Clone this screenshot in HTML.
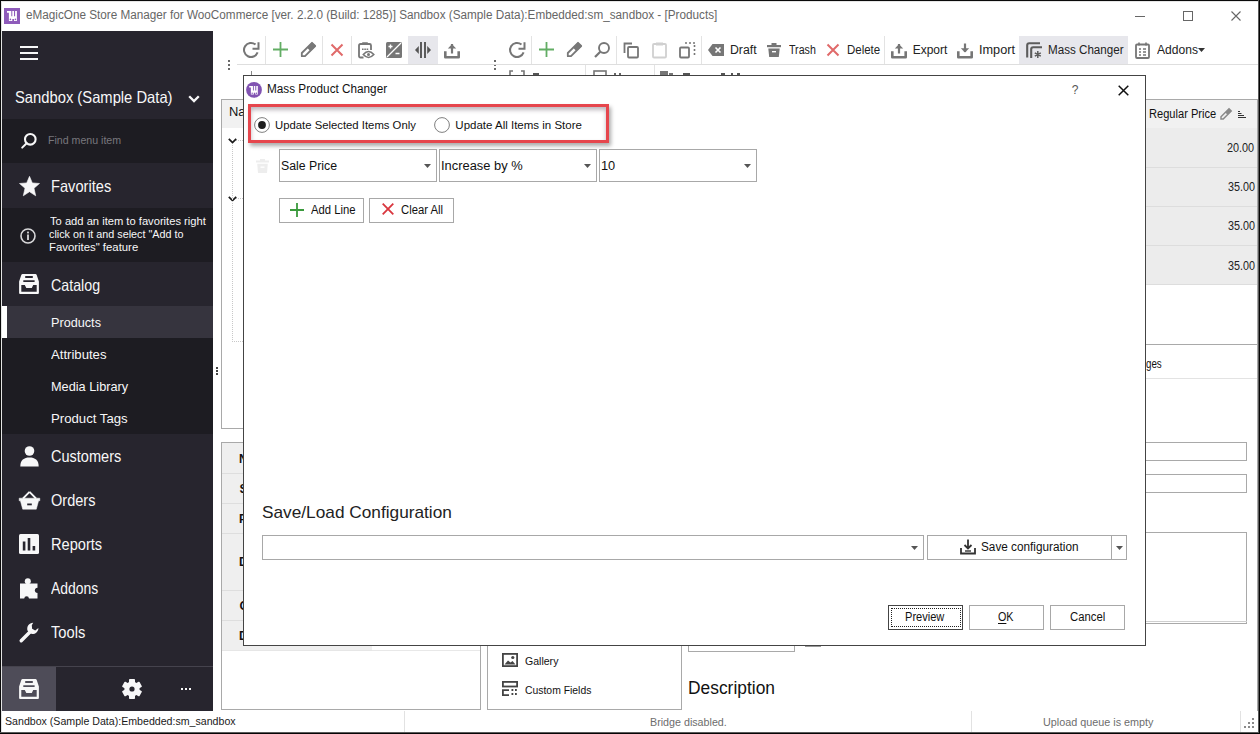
<!DOCTYPE html>
<html><head><meta charset="utf-8">
<style>
*{margin:0;padding:0;box-sizing:border-box}
html,body{width:1260px;height:734px;overflow:hidden;background:#fff;font-family:"Liberation Sans",sans-serif;position:relative}
.a{position:absolute}
svg.a{overflow:visible}
.t{position:absolute;white-space:nowrap;line-height:1}
</style></head>
<body>
<div class="a" style="left:0px;top:0px;width:1260px;height:734px;background:#fff;"></div>
<svg class="a" style="left:4px;top:8px" width="16" height="16" viewBox="0 0 16 16"><rect width="16" height="16" fill="#8e5bba"/><path fill="#fff" d="M3 3H7.3V8.3H8.3V3H10V8.3H11.1V3H12.9V13H10V10.9H8.3V13H4.9V4.7H3Z"/><circle cx="6.4" cy="11.4" r="0.8" fill="#8e5bba"/><circle cx="11.4" cy="11.4" r="0.8" fill="#8e5bba"/></svg>
<div class="t" style="left:25.53px;top:8.54px;font-size:12px;color:#666;transform:scaleX(0.9771);transform-origin:0 0;">eMagicOne Store Manager for WooCommerce [ver. 2.2.0 (Build: 1285)] Sandbox (Sample Data):Embedded:sm_sandbox - [Products]</div>
<div class="a" style="left:1135px;top:16px;width:10px;height:1px;background:#666;"></div>
<div class="a" style="left:1183px;top:11px;width:10px;height:10px;border:1px solid #666"></div>
<svg class="a" style="left:1231px;top:11px" width="10" height="10" viewBox="0 0 10 10"><path d="M0.5 0.5L9.5 9.5M9.5 0.5L0.5 9.5" stroke="#666" stroke-width="1.1"/></svg>
<div class="a" style="left:2px;top:31px;width:211px;height:680px;background:#27252e;"></div>
<div class="a" style="left:20px;top:46px;width:18px;height:2px;background:#f7f7f8;"></div>
<div class="a" style="left:20px;top:52px;width:18px;height:2px;background:#f7f7f8;"></div>
<div class="a" style="left:20px;top:58px;width:18px;height:2px;background:#f7f7f8;"></div>
<div class="t" style="left:15.14px;top:89.13px;font-size:16.5px;color:#f7f7f8;transform:scaleX(0.8945);transform-origin:0 0;">Sandbox (Sample Data)</div>
<svg class="a" style="left:188px;top:94.6px" width="12" height="8" viewBox="0 0 12 8"><path d="M1.2 1.2L6 6L10.8 1.2" stroke="#f7f7f8" stroke-width="2.3" fill="none"/></svg>
<div class="a" style="left:2px;top:119px;width:211px;height:44px;background:#1d1c22;"></div>
<svg class="a" style="left:21px;top:133px" width="17" height="17" viewBox="0 0 17 17"><circle cx="9.3" cy="6.3" r="5.3" stroke="#f7f7f8" stroke-width="2.1" fill="none"/><path d="M5.6 10.2L1.2 14.6" stroke="#f7f7f8" stroke-width="2" stroke-linecap="round"/></svg>
<div class="t" style="left:48.05px;top:134.57px;font-size:11.5px;color:#78777d;transform:scaleX(0.9224);transform-origin:0 0;">Find menu item</div>
<svg class="a" style="left:18.5px;top:176px" width="21" height="20.5" viewBox="0 0 21 20.5"><path d="M10.5 0.3L13.3 6.9L20.5 7.5L15 12.2L16.7 19.8L10.5 15.7L4.3 19.8L6 12.2L0.5 7.5L7.7 6.9Z" fill="#f7f7f8" stroke="#f7f7f8" stroke-width="0.6" stroke-linejoin="round"/></svg>
<div class="t" style="left:51.33px;top:178.03px;font-size:16.5px;color:#f7f7f8;transform:scaleX(0.8875);transform-origin:0 0;">Favorites</div>
<div class="a" style="left:2px;top:208px;width:211px;height:54px;background:#1d1c22;"></div>
<svg class="a" style="left:20px;top:227.5px" width="16" height="16" viewBox="0 0 16 16"><circle cx="8" cy="8" r="7" stroke="#d8d8da" stroke-width="1.6" fill="none"/><rect x="7.1" y="6.5" width="1.8" height="5.5" fill="#d8d8da"/><rect x="7.1" y="3.6" width="1.8" height="1.8" fill="#d8d8da"/></svg>
<div class="t" style="left:49.68px;top:215.97px;font-size:11.5px;color:#f7f7f8;transform:scaleX(0.9713);transform-origin:0 0;">To add an item to favorites right</div>
<div class="t" style="left:49.47px;top:228.97px;font-size:11.5px;color:#f7f7f8;transform:scaleX(0.9376);transform-origin:0 0;">click on it and select "Add to</div>
<div class="t" style="left:48.99px;top:241.97px;font-size:11.5px;color:#f7f7f8;transform:scaleX(0.9870);transform-origin:0 0;">Favorites" feature</div>
<svg class="a" style="left:19px;top:274px" width="20" height="20" viewBox="0 0 20 20"><path fill-rule="evenodd" fill="#f7f7f8" d="M3.6 0H16.4Q17.4 0 17.7 1L19.9 7.6V19Q19.9 20 18.9 20H1.1Q0.1 20 0.1 19V7.6L2.3 1Q2.6 0 3.6 0Z M6.2 2.1H13.8V3.9H6.2Z M4.3 6.2H15.6V8H4.3Z M2.3 11.1H5.8L7.3 14.1H12.8L14.2 11.1H17.7V17.7H2.3Z"/></svg>
<div class="t" style="left:50.99px;top:276.53px;font-size:16.5px;color:#f7f7f8;transform:scaleX(0.8632);transform-origin:0 0;">Catalog</div>
<div class="a" style="left:2px;top:306px;width:211px;height:32px;background:#36343e;"></div>
<div class="a" style="left:2px;top:306px;width:5px;height:32px;background:#fff;"></div>
<div class="t" style="left:51.49px;top:315.77px;font-size:13.5px;color:#f7f7f8;transform:scaleX(0.9380);transform-origin:0 0;">Products</div>
<div class="a" style="left:2px;top:338px;width:211px;height:96px;background:#1d1c22;"></div>
<div class="t" style="left:51.20px;top:347.77px;font-size:13.5px;color:#f7f7f8;transform:scaleX(0.9723);transform-origin:0 0;">Attributes</div>
<div class="t" style="left:51.48px;top:379.77px;font-size:13.5px;color:#f7f7f8;transform:scaleX(0.9439);transform-origin:0 0;">Media Library</div>
<div class="t" style="left:51.45px;top:411.77px;font-size:13.5px;color:#f7f7f8;transform:scaleX(0.9764);transform-origin:0 0;">Product Tags</div>
<svg class="a" style="left:20px;top:446px" width="19" height="21" viewBox="0 0 19 21"><circle cx="9.5" cy="5" r="4.8" fill="#f7f7f8"/><path d="M0.3 20.5C0.3 14 4 11.5 9.5 11.5S18.7 14 18.7 20.5Z" fill="#f7f7f8"/></svg>
<div class="t" style="left:51.17px;top:448.13px;font-size:16.5px;color:#f7f7f8;transform:scaleX(0.8804);transform-origin:0 0;">Customers</div>
<svg class="a" style="left:19px;top:491px" width="21" height="19" viewBox="0 0 21 19"><path d="M10.5 0.8L4 7.5M10.5 0.8L17 7.5" stroke="#f7f7f8" stroke-width="1.8" fill="none"/><path d="M0.2 7.2h20.6v2.6h-1.2L17.3 18.2H3.7L1.4 9.8H0.2Z" fill="#f7f7f8" stroke="#f7f7f8" stroke-width="0.5" stroke-linejoin="round"/><rect x="8.2" y="12.5" width="4.6" height="1.8" fill="#27252e"/></svg>
<div class="t" style="left:51.05px;top:492.03px;font-size:16.5px;color:#f7f7f8;transform:scaleX(0.8821);transform-origin:0 0;">Orders</div>
<svg class="a" style="left:19px;top:534px" width="20" height="20" viewBox="0 0 20 20"><rect x="0" y="0" width="20" height="20" rx="1.5" fill="#f7f7f8"/><rect x="3.8" y="7.5" width="2.6" height="9" fill="#27252e"/><rect x="8.7" y="4" width="2.6" height="12.5" fill="#27252e"/><rect x="13.6" y="12" width="2.6" height="4.5" fill="#27252e"/></svg>
<div class="t" style="left:50.93px;top:536.03px;font-size:16.5px;color:#f7f7f8;transform:scaleX(0.8845);transform-origin:0 0;">Reports</div>
<svg class="a" style="left:20px;top:577.5px" width="18" height="21" viewBox="0 0 18 21"><path fill="#f7f7f8" d="M0 5.5H17.5V20.5H0Z"/><circle cx="7.8" cy="3.2" r="3" fill="#f7f7f8"/><circle cx="17.5" cy="12.3" r="2.6" fill="#27252e"/><circle cx="6.6" cy="20.6" r="2.3" fill="#27252e"/></svg>
<div class="t" style="left:50.70px;top:580.03px;font-size:16.5px;color:#f7f7f8;transform:scaleX(0.8436);transform-origin:0 0;">Addons</div>
<svg class="a" style="left:19px;top:622px" width="21" height="21" viewBox="0 0 21 21"><path d="M2.2 18.8L11.2 9.8" stroke="#f7f7f8" stroke-width="3.4" stroke-linecap="round"/><path d="M14.2 0.8a5.9 5.9 0 0 0-5.6 8l2.8 2.8a5.9 5.9 0 0 0 8-5.6l-3.2 2.6-3.1-1.9-0.3-3.5Z" fill="#f7f7f8"/></svg>
<div class="t" style="left:50.71px;top:624.03px;font-size:16.5px;color:#f7f7f8;transform:scaleX(0.8905);transform-origin:0 0;">Tools</div>
<div class="a" style="left:2px;top:666px;width:211px;height:1px;background:#45434d;"></div>
<div class="a" style="left:2px;top:667px;width:54px;height:44px;background:#4e4c58;"></div>
<svg class="a" style="left:19px;top:679px" width="20" height="20" viewBox="0 0 20 20"><path fill-rule="evenodd" fill="#f7f7f8" d="M3.6 0H16.4Q17.4 0 17.7 1L19.9 7.6V19Q19.9 20 18.9 20H1.1Q0.1 20 0.1 19V7.6L2.3 1Q2.6 0 3.6 0Z M6.2 2.1H13.8V3.9H6.2Z M4.3 6.2H15.6V8H4.3Z M2.3 11.1H5.8L7.3 14.1H12.8L14.2 11.1H17.7V17.7H2.3Z"/></svg>
<svg class="a" style="left:122px;top:679px" width="20" height="20" viewBox="0 0 20 20"><g transform="translate(10 10)" fill="#f7f7f8"><circle r="7.6"/><rect x="-3" y="-10" width="6" height="5" rx="0.8" transform="rotate(0)"/><rect x="-3" y="-10" width="6" height="5" rx="0.8" transform="rotate(60)"/><rect x="-3" y="-10" width="6" height="5" rx="0.8" transform="rotate(120)"/><rect x="-3" y="-10" width="6" height="5" rx="0.8" transform="rotate(180)"/><rect x="-3" y="-10" width="6" height="5" rx="0.8" transform="rotate(240)"/><rect x="-3" y="-10" width="6" height="5" rx="0.8" transform="rotate(300)"/></g><circle cx="10" cy="10" r="2.6" fill="#27252e"/></svg>
<div class="a" style="left:181px;top:688px;width:2px;height:2px;background:#f7f7f8;"></div>
<div class="a" style="left:185px;top:688px;width:2px;height:2px;background:#f7f7f8;"></div>
<div class="a" style="left:189px;top:688px;width:2px;height:2px;background:#f7f7f8;"></div>
<div class="t" style="left:4.82px;top:716.27px;font-size:11.5px;color:#1a1a1a;transform:scaleX(0.9225);transform-origin:0 0;">Sandbox (Sample Data):Embedded:sm_sandbox</div>
<div class="a" style="left:404px;top:711px;width:1px;height:21px;background:#e2e2e2;"></div>
<div class="t" style="left:650.44px;top:716.57px;font-size:11.5px;color:#6d6d6d;transform:scaleX(0.9310);transform-origin:0 0;">Bridge disabled.</div>
<div class="a" style="left:971px;top:711px;width:1px;height:21px;background:#e2e2e2;"></div>
<div class="t" style="left:1043.49px;top:716.57px;font-size:11.5px;color:#6d6d6d;transform:scaleX(0.9394);transform-origin:0 0;">Upload queue is empty</div>
<div class="a" style="left:1240px;top:711px;width:1px;height:21px;background:#e2e2e2;"></div>
<div class="a" style="left:1252px;top:718px;width:2px;height:2px;background:#8a8a8a;"></div>
<div class="a" style="left:1248px;top:722px;width:2px;height:2px;background:#8a8a8a;"></div>
<div class="a" style="left:1252px;top:722px;width:2px;height:2px;background:#8a8a8a;"></div>
<div class="a" style="left:1244px;top:726px;width:2px;height:2px;background:#8a8a8a;"></div>
<div class="a" style="left:1248px;top:726px;width:2px;height:2px;background:#8a8a8a;"></div>
<div class="a" style="left:1252px;top:726px;width:2px;height:2px;background:#8a8a8a;"></div>
<div class="a" style="left:228px;top:60px;width:2px;height:2px;background:#6a6a6a;"></div>
<div class="a" style="left:228px;top:64px;width:2px;height:2px;background:#6a6a6a;"></div>
<div class="a" style="left:228px;top:68px;width:2px;height:2px;background:#6a6a6a;"></div>
<div class="a" style="left:494px;top:60px;width:2px;height:2px;background:#6a6a6a;"></div>
<div class="a" style="left:494px;top:64px;width:2px;height:2px;background:#6a6a6a;"></div>
<div class="a" style="left:494px;top:68px;width:2px;height:2px;background:#6a6a6a;"></div>
<div class="a" style="left:237px;top:64px;width:1021px;height:1px;background:#dedede;"></div>
<div class="a" style="left:408px;top:36px;width:30px;height:28px;background:#e7e7ec;"></div>
<div class="a" style="left:1019px;top:36px;width:109px;height:28px;background:#e7e7ec;"></div>
<div class="a" style="left:265px;top:36px;width:1px;height:28px;background:#e3e3e3;"></div>
<div class="a" style="left:322px;top:36px;width:1px;height:28px;background:#e3e3e3;"></div>
<div class="a" style="left:351px;top:36px;width:1px;height:28px;background:#e3e3e3;"></div>
<div class="a" style="left:531px;top:36px;width:1px;height:28px;background:#e3e3e3;"></div>
<div class="a" style="left:616px;top:36px;width:1px;height:28px;background:#e3e3e3;"></div>
<div class="a" style="left:701px;top:36px;width:1px;height:28px;background:#e3e3e3;"></div>
<div class="a" style="left:884px;top:36px;width:1px;height:28px;background:#e3e3e3;"></div>
<svg class="a" style="left:243px;top:42px" width="17" height="16" viewBox="0 0 17 16"><path d="M14.6 10.4A7 7 0 1 1 12.5 2.6" stroke="#767676" stroke-width="2" fill="none"/><path d="M15.5 0.2V6.8H9.5" stroke="#767676" stroke-width="2" fill="none"/></svg>
<svg class="a" style="left:273px;top:42px" width="15" height="15" viewBox="0 0 15 15"><path d="M7.5 0v15M0 7.5h15" stroke="#62ad64" stroke-width="1.8"/></svg>
<svg class="a" style="left:300px;top:42px" width="16" height="16" viewBox="0 0 16 16"><path d="M12 0.8L15.2 4L5 14.2H1.8V11Z" fill="none" stroke="#787878" stroke-width="1.8" stroke-linejoin="round"/><path d="M12 0.8L15.2 4L10.5 8.7L7.3 5.5Z" fill="#787878" stroke="#787878" stroke-width="1"/></svg>
<svg class="a" style="left:331px;top:44px" width="12" height="12" viewBox="0 0 12 12"><path d="M0.5 0.5L11.5 11.5M11.5 0.5L0.5 11.5" stroke="#e06a6a" stroke-width="2"/></svg>
<svg class="a" style="left:358px;top:42px" width="17" height="17" viewBox="0 0 17 17"><path d="M5.5 15.5H2.5Q1 15.5 1 14V3.5Q1 2 2.5 2H11.5Q13 2 13 3.5V8" stroke="#767676" stroke-width="1.8" fill="none"/><rect x="4" y="0.3" width="6" height="2.8" rx="0.8" fill="#767676"/><path d="M4 7.2h1.6M6.3 7.2h1.6M8.6 7.2h1.6" stroke="#767676" stroke-width="1.5"/><path d="M5.3 12.5Q10.5 6.5 15.8 12.5Q10.5 18.5 5.3 12.5Z" fill="#fff" stroke="#767676" stroke-width="1.6"/><circle cx="10.5" cy="12.5" r="1.5" fill="#767676"/></svg>
<svg class="a" style="left:386px;top:42px" width="16" height="16" viewBox="0 0 16 16"><rect x="0" y="0" width="16" height="16" rx="1.5" fill="#767676"/><path d="M15 1L1 15" stroke="#fff" stroke-width="1.3"/><path d="M2.5 4.5h4M4.5 2.5v4M9.5 11.5h4" stroke="#fff" stroke-width="1.4"/></svg>
<svg class="a" style="left:414px;top:42px" width="18" height="16" viewBox="0 0 18 16"><path d="M7 0v16M11 0v16" stroke="#555" stroke-width="1.9"/><path d="M4.8 4L1 8L4.8 12Z M13.2 4L17 8L13.2 12Z" fill="#555"/></svg>
<svg class="a" style="left:444px;top:42.5px" width="16" height="16" viewBox="0 0 16 16"><path d="M8 1v9.5" stroke="#767676" stroke-width="2.2"/><path d="M3.8 5.6L8 1.2L12.2 5.6Z" fill="#767676"/><path d="M1.3 8.2V14.2H14.7V8.2" stroke="#767676" stroke-width="2.6" fill="none" stroke-linejoin="round"/></svg>
<svg class="a" style="left:509px;top:42px" width="17" height="16" viewBox="0 0 17 16"><path d="M14.6 10.4A7 7 0 1 1 12.5 2.6" stroke="#767676" stroke-width="2" fill="none"/><path d="M15.5 0.2V6.8H9.5" stroke="#767676" stroke-width="2" fill="none"/></svg>
<svg class="a" style="left:539px;top:42px" width="15" height="15" viewBox="0 0 15 15"><path d="M7.5 0v15M0 7.5h15" stroke="#62ad64" stroke-width="1.8"/></svg>
<svg class="a" style="left:566px;top:42px" width="16" height="16" viewBox="0 0 16 16"><path d="M12 0.8L15.2 4L5 14.2H1.8V11Z" fill="none" stroke="#787878" stroke-width="1.8" stroke-linejoin="round"/><path d="M12 0.8L15.2 4L10.5 8.7L7.3 5.5Z" fill="#787878" stroke="#787878" stroke-width="1"/></svg>
<svg class="a" style="left:594px;top:42px" width="16" height="16" viewBox="0 0 16 16"><circle cx="10" cy="6" r="5" stroke="#767676" stroke-width="1.9" fill="none"/><path d="M6.3 9.7L1 15" stroke="#767676" stroke-width="2.2"/></svg>
<svg class="a" style="left:623px;top:42px" width="16" height="16" viewBox="0 0 16 16"><path d="M9 1.5H1.5V11" stroke="#767676" stroke-width="1.8" fill="none"/><rect x="5" y="5" width="10" height="10.5" rx="1" stroke="#767676" stroke-width="1.8" fill="none"/></svg>
<svg class="a" style="left:652px;top:42px" width="15" height="16" viewBox="0 0 15 16"><rect x="1" y="2" width="13" height="13.5" rx="1" stroke="#d0d0d0" stroke-width="1.8" fill="none"/><rect x="4" y="0.5" width="7" height="3" fill="#d0d0d0"/></svg>
<svg class="a" style="left:679px;top:42px" width="17" height="16" viewBox="0 0 17 16"><rect x="1" y="5.5" width="9" height="10" rx="1" stroke="#767676" stroke-width="1.8" fill="none"/><path d="M6 1h2M10 1h2M14 1h2M15.5 3v2M15.5 7v2M15.5 11v2" stroke="#767676" stroke-width="1.6"/></svg>
<svg class="a" style="left:708px;top:44px" width="16" height="12" viewBox="0 0 16 12"><path d="M4.5 0H16V12H4.5L0 6Z" fill="#767676"/><path d="M7.5 3.5l5 5M12.5 3.5l-5 5" stroke="#fff" stroke-width="1.6"/></svg>
<div class="t" style="left:729.72px;top:43.84px;font-size:12px;color:#222;transform:scaleX(1.0232);transform-origin:0 0;">Draft</div>
<svg class="a" style="left:767px;top:43px" width="14" height="14" viewBox="0 0 14 14"><rect x="0" y="2" width="14" height="2.2" fill="#767676"/><rect x="4.5" y="0" width="5" height="2.5" fill="#767676"/><path d="M1.3 5.5h11.4L11.8 14H2.2Z" fill="#767676"/><rect x="5" y="8" width="4" height="1.4" fill="#fff"/></svg>
<div class="t" style="left:788.79px;top:43.84px;font-size:12px;color:#222;transform:scaleX(0.8880);transform-origin:0 0;">Trash</div>
<svg class="a" style="left:827px;top:44px" width="12" height="12" viewBox="0 0 12 12"><path d="M0.5 0.5L11.5 11.5M11.5 0.5L0.5 11.5" stroke="#e06a6a" stroke-width="2"/></svg>
<div class="t" style="left:847.18px;top:43.84px;font-size:12px;color:#222;transform:scaleX(0.9567);transform-origin:0 0;">Delete</div>
<svg class="a" style="left:891px;top:42.5px" width="16" height="16" viewBox="0 0 16 16"><path d="M8 1v9.5" stroke="#767676" stroke-width="2.2"/><path d="M3.8 5.6L8 1.2L12.2 5.6Z" fill="#767676"/><path d="M1.3 8.2V14.2H14.7V8.2" stroke="#767676" stroke-width="2.6" fill="none" stroke-linejoin="round"/></svg>
<div class="t" style="left:912.64px;top:43.84px;font-size:12px;color:#222;">Export</div>
<svg class="a" style="left:957px;top:42.5px" width="16" height="16" viewBox="0 0 16 16"><path d="M8 0.5V9" stroke="#767676" stroke-width="2.2"/><path d="M3.8 5.2L8 9.6L12.2 5.2Z" fill="#767676"/><path d="M1.3 8.2V14.2H14.7V8.2" stroke="#767676" stroke-width="2.6" fill="none" stroke-linejoin="round"/></svg>
<div class="t" style="left:978.76px;top:43.84px;font-size:12px;color:#222;transform:scaleX(1.0584);transform-origin:0 0;">Import</div>
<svg class="a" style="left:1026px;top:42px" width="17" height="17" viewBox="0 0 17 17"><path d="M1.2 15.5V3.2Q1.2 1.2 3.2 1.2H14" stroke="#5c5c5c" stroke-width="2.1" fill="none"/><path d="M5.2 16V7.2Q5.2 5.2 7.2 5.2H16" stroke="#5c5c5c" stroke-width="2.1" fill="none"/><path d="M11.8 9V16M8.8 10.8L14.8 14.2M14.8 10.8L8.8 14.2" stroke="#5c5c5c" stroke-width="1.5"/></svg>
<div class="t" style="left:1047.77px;top:43.84px;font-size:12px;color:#222;transform:scaleX(0.9685);transform-origin:0 0;">Mass Changer</div>
<svg class="a" style="left:1135px;top:42px" width="15" height="17" viewBox="0 0 15 17"><rect x="1" y="2.5" width="13" height="13.5" rx="1" stroke="#767676" stroke-width="1.8" fill="none"/><path d="M4 0.5v3M11 0.5v3" stroke="#767676" stroke-width="1.6"/><path d="M4 7h2M8 7h3M4 10h2M8 10h3M4 13h2M8 13h3" stroke="#767676" stroke-width="1.3"/></svg>
<div class="t" style="left:1156.50px;top:43.84px;font-size:12px;color:#222;transform:scaleX(1.0060);transform-origin:0 0;">Addons</div>
<svg class="a" style="left:1198px;top:48px" width="7" height="4" viewBox="0 0 7 4"><path d="M0 0h7L3.5 4Z" fill="#333"/></svg>
<div class="a" style="left:585px;top:65px;width:1px;height:10px;background:#e3e3e3;"></div>
<div class="a" style="left:654px;top:65px;width:1px;height:10px;background:#e3e3e3;"></div>
<div class="a" style="left:251px;top:71px;width:1px;height:4px;background:#888;"></div>
<svg class="a" style="left:509px;top:70px" width="16" height="5" viewBox="0 0 16 5"><path d="M1 5V1h3M12 1h3v4" stroke="#767676" stroke-width="1.6" fill="none"/></svg>
<div class="a" style="left:533px;top:73px;width:6px;height:2px;background:#555;"></div>
<div class="a" style="left:614px;top:73px;width:2px;height:2px;background:#666;"></div>
<div class="a" style="left:619px;top:73px;width:2px;height:2px;background:#666;"></div>
<div class="a" style="left:683px;top:73px;width:7px;height:2px;background:#555;"></div>
<div class="a" style="left:721px;top:73px;width:4px;height:2px;background:#555;"></div>
<div class="a" style="left:731px;top:73px;width:2px;height:2px;background:#555;"></div>
<div class="a" style="left:737px;top:73px;width:3px;height:2px;background:#555;"></div>
<svg class="a" style="left:593px;top:70px" width="16" height="5" viewBox="0 0 16 5"><rect x="1" y="1" width="12" height="8" stroke="#767676" stroke-width="1.6" fill="none"/></svg>
<svg class="a" style="left:660px;top:70px" width="30" height="5" viewBox="0 0 30 5"><rect x="0" y="1" width="8" height="4" fill="#767676"/><rect x="9" y="3" width="4" height="2" fill="#767676"/></svg>
<div class="a" style="left:221px;top:99px;width:1037px;height:1px;background:#a9a9a9;"></div>
<div class="a" style="left:221px;top:99px;width:1px;height:330px;background:#a9a9a9;"></div>
<div class="a" style="left:221px;top:428px;width:23px;height:1px;background:#a9a9a9;"></div>
<div class="a" style="left:1146px;top:344px;width:112px;height:1px;background:#a9a9a9;"></div>
<div class="a" style="left:222px;top:100px;width:1035px;height:28px;background:#f1f1f1;"></div>
<div class="a" style="left:1146px;top:128px;width:111px;height:156px;background:#ececec;"></div>
<div class="a" style="left:1146px;top:167px;width:111px;height:1px;background:#dddddd;"></div>
<div class="a" style="left:1146px;top:206px;width:111px;height:1px;background:#dddddd;"></div>
<div class="a" style="left:1146px;top:245px;width:111px;height:1px;background:#dddddd;"></div>
<div class="a" style="left:1146px;top:284px;width:111px;height:1px;background:#dddddd;"></div>
<div class="t" style="left:228.57px;top:106.14px;font-size:12px;color:#111;transform:scaleX(1.0764);transform-origin:0 0;">Na</div>
<div class="t" style="left:1148.91px;top:107.54px;font-size:12px;color:#111;transform:scaleX(0.9239);transform-origin:0 0;">Regular Price</div>
<svg class="a" style="left:1220px;top:108px" width="12" height="12" viewBox="0 0 12 12"><path d="M9 0.8L11.2 3L3.2 11H1V8.8Z" fill="none" stroke="#8a8a8a" stroke-width="1.5"/><path d="M9 0.8L11.2 3L7.5 6.7L5.3 4.5Z" fill="#8a8a8a"/></svg>
<svg class="a" style="left:1238px;top:111px" width="9" height="8" viewBox="0 0 9 8"><path d="M0 0.5h2M0 2.5h3.5M0 4.5h6M0 6.5h8" stroke="#333" stroke-width="1"/></svg>
<div class="t" style="left:1227.46px;top:141.84px;font-size:12px;color:#222;transform:scaleX(0.9041);transform-origin:0 0;">20.00</div>
<div class="t" style="left:1227.62px;top:181.44px;font-size:12px;color:#222;transform:scaleX(0.8985);transform-origin:0 0;">35.00</div>
<div class="t" style="left:1227.62px;top:220.44px;font-size:12px;color:#222;transform:scaleX(0.8985);transform-origin:0 0;">35.00</div>
<div class="t" style="left:1227.62px;top:259.64px;font-size:12px;color:#222;transform:scaleX(0.8985);transform-origin:0 0;">35.00</div>
<svg class="a" style="left:227.5px;top:137.5px" width="9" height="6" viewBox="0 0 9 6"><path d="M0.8 0.8L4.5 4.6L8.2 0.8" stroke="#1a1a1a" stroke-width="1.7" fill="none"/></svg>
<svg class="a" style="left:227.5px;top:195.5px" width="9" height="6" viewBox="0 0 9 6"><path d="M0.8 0.8L4.5 4.6L8.2 0.8" stroke="#1a1a1a" stroke-width="1.7" fill="none"/></svg>
<div class="a" style="left:232px;top:145px;width:1px;height:197px;border-left:1px dotted #c8c8c8"></div>
<div class="a" style="left:236px;top:140px;width:7px;height:1px;border-top:1px dotted #c8c8c8"></div>
<div class="a" style="left:236px;top:198px;width:7px;height:1px;border-top:1px dotted #c8c8c8"></div>
<div class="a" style="left:232px;top:341px;width:11px;height:1px;border-top:1px dotted #c8c8c8"></div>
<div class="a" style="left:216px;top:367px;width:2px;height:2px;background:#444;"></div>
<div class="a" style="left:216px;top:370px;width:2px;height:2px;background:#444;"></div>
<div class="a" style="left:216px;top:373px;width:2px;height:2px;background:#444;"></div>
<div class="t" style="left:1145.91px;top:357.64px;font-size:12px;color:#111;transform:scaleX(0.8143);transform-origin:0 0;">ges</div>
<div class="a" style="left:1145px;top:378px;width:113px;height:1px;background:#e3e3e3;"></div>
<div class="a" style="left:1257px;top:99px;width:1px;height:612px;background:#a9a9a9;"></div>
<div class="a" style="left:1100px;top:442px;width:147px;height:19px;border:1px solid #a9a9a9"></div>
<div class="a" style="left:1100px;top:474px;width:147px;height:19px;border:1px solid #a9a9a9"></div>
<div class="a" style="left:1100px;top:532px;width:147px;height:92px;border:1px solid #a9a9a9"></div>
<div class="a" style="left:1100px;top:621px;width:147px;height:1px;background:#cfcfcf;"></div>
<div class="a" style="left:221px;top:442px;width:260px;height:268px;border:1px solid #a9a9a9"></div>
<div class="a" style="left:222px;top:443px;width:150px;height:30px;background:#efefef;"></div>
<div class="a" style="left:222px;top:474px;width:150px;height:29px;background:#efefef;"></div>
<div class="a" style="left:222px;top:504px;width:150px;height:29px;background:#efefef;"></div>
<div class="a" style="left:222px;top:534px;width:150px;height:56px;background:#efefef;"></div>
<div class="a" style="left:222px;top:591px;width:150px;height:29px;background:#efefef;"></div>
<div class="a" style="left:222px;top:621px;width:150px;height:29px;background:#efefef;"></div>
<div class="a" style="left:222px;top:473px;width:21px;height:1px;background:#dedede;"></div>
<div class="a" style="left:222px;top:503px;width:21px;height:1px;background:#dedede;"></div>
<div class="a" style="left:222px;top:533px;width:21px;height:1px;background:#dedede;"></div>
<div class="a" style="left:222px;top:590px;width:21px;height:1px;background:#dedede;"></div>
<div class="a" style="left:222px;top:620px;width:21px;height:1px;background:#dedede;"></div>
<div class="a" style="left:222px;top:650px;width:21px;height:1px;background:#dedede;"></div>
<div class="a" style="left:222px;top:650px;width:150px;height:1px;background:#e6e6e6;"></div>
<div class="a" style="left:372px;top:650px;width:108px;height:1px;background:#e8e8e8;"></div>
<div class="t" style="left:239.12px;top:452.84px;font-size:12px;color:#111;font-weight:bold;">N</div>
<div class="t" style="left:239.60px;top:482.84px;font-size:12px;color:#111;font-weight:bold;">S</div>
<div class="t" style="left:239.12px;top:512.84px;font-size:12px;color:#111;font-weight:bold;">P</div>
<div class="t" style="left:239.12px;top:555.84px;font-size:12px;color:#111;font-weight:bold;">D</div>
<div class="t" style="left:239.42px;top:600.34px;font-size:12px;color:#111;font-weight:bold;">C</div>
<div class="t" style="left:239.12px;top:629.84px;font-size:12px;color:#111;font-weight:bold;">D</div>
<div class="a" style="left:487px;top:629px;width:195px;height:81px;border:1px solid #a9a9a9"></div>
<svg class="a" style="left:502px;top:653px" width="16" height="14" viewBox="0 0 16 14"><rect x="0.9" y="0.9" width="14.2" height="12.2" stroke="#444" stroke-width="1.8" fill="none"/><path d="M2.5 11.5L6 7.5L8.5 9.5L10.5 8L13.5 11.5Z" fill="#444"/><circle cx="10.8" cy="4.5" r="1.6" fill="#444"/></svg>
<div class="t" style="left:525.27px;top:656.47px;font-size:11.5px;color:#111;transform:scaleX(0.9169);transform-origin:0 0;">Gallery</div>
<svg class="a" style="left:502px;top:681px" width="16" height="15" viewBox="0 0 16 15"><rect x="0.9" y="0.9" width="14.2" height="4.6" stroke="#444" stroke-width="1.8" fill="none"/><path d="M7 9.2H0.9v4.9H7" stroke="#444" stroke-width="1.8" fill="none"/><path d="M9.5 9h1.8M13 9h1.8M9.5 13h1.8M13 13h1.8" stroke="#444" stroke-width="1.8"/></svg>
<div class="t" style="left:525.28px;top:684.77px;font-size:11.5px;color:#111;transform:scaleX(0.9034);transform-origin:0 0;">Custom Fields</div>
<div class="a" style="left:688px;top:600px;width:107px;height:52px;border:1px solid #a9a9a9"></div>
<div class="a" style="left:805px;top:646px;width:16px;height:1px;background:#999;"></div>
<div class="t" style="left:688.11px;top:680.49px;font-size:17.5px;color:#111;transform:scaleX(0.9935);transform-origin:0 0;">Description</div>
<div class="a" style="left:243px;top:75px;width:903px;height:571px;background:#fff;border:1px solid #444"></div>
<svg class="a" style="left:246px;top:82px" width="16" height="16" viewBox="0 0 16 16"><circle cx="8" cy="7.9" r="7.9" fill="#8153b2"/><g transform="translate(0.6 1.3) scale(0.87)"><path fill="#fff" d="M3 3H7.3V8.3H8.3V3H10V8.3H11.1V3H12.9V13H10V10.9H8.3V13H4.9V4.7H3Z"/><circle cx="6.4" cy="11.4" r="0.8" fill="#8153b2"/><circle cx="11.4" cy="11.4" r="0.8" fill="#8153b2"/></g></svg>
<div class="t" style="left:267.26px;top:82.54px;font-size:12px;color:#111;transform:scaleX(0.9785);transform-origin:0 0;">Mass Product Changer</div>
<div class="t" style="left:1071.82px;top:83.84px;font-size:12px;color:#555;">?</div>
<svg class="a" style="left:1118px;top:85px" width="11" height="11" viewBox="0 0 11 11"><path d="M0.7 0.7L10.3 10.3M10.3 0.7L0.7 10.3" stroke="#111" stroke-width="1.5"/></svg>
<div class="a" style="left:248px;top:104px;width:361px;height:39px;border:3px solid #e6464d;box-shadow:2px 3px 4px rgba(0,0,0,0.33), inset 0 3px 4px rgba(40,20,40,0.3)"></div>
<svg class="a" style="left:254px;top:117px" width="16" height="16" viewBox="0 0 16 16"><circle cx="8" cy="8" r="7.4" fill="#fff" stroke="#707070" stroke-width="0.9"/><circle cx="8" cy="8" r="3.9" fill="#1e1e1e"/></svg>
<div class="t" style="left:275.15px;top:120.07px;font-size:11.5px;color:#111;transform:scaleX(0.9838);transform-origin:0 0;">Update Selected Items Only</div>
<svg class="a" style="left:434px;top:117px" width="16" height="16" viewBox="0 0 16 16"><circle cx="8" cy="8" r="7.4" fill="#fff" stroke="#707070" stroke-width="0.9"/></svg>
<div class="t" style="left:455.34px;top:120.07px;font-size:11.5px;color:#111;">Update All Items in Store</div>
<svg class="a" style="left:256px;top:159px" width="13" height="14" viewBox="0 0 13 14"><rect x="0" y="1.5" width="13" height="2" fill="#ededed"/><rect x="4" y="0" width="5" height="2" fill="#ededed"/><path d="M1.2 4.8h10.6L11 14H2Z" fill="#ededed"/><rect x="4.5" y="7.5" width="4" height="1.3" fill="#fff"/></svg>
<div class="a" style="left:279px;top:149px;width:158px;height:33px;border:1px solid #a8a8a8"></div>
<div class="t" style="left:281.15px;top:159.64px;font-size:12px;color:#111;transform:scaleX(1.0254);transform-origin:0 0;">Sale Price</div>
<svg class="a" style="left:424px;top:164px" width="7" height="4" viewBox="0 0 7 4"><path d="M0 0h7L3.5 4Z" fill="#555"/></svg>
<div class="a" style="left:439px;top:149px;width:158px;height:33px;border:1px solid #a8a8a8"></div>
<div class="t" style="left:440.54px;top:159.64px;font-size:12px;color:#111;transform:scaleX(1.0735);transform-origin:0 0;">Increase by %</div>
<svg class="a" style="left:584px;top:164px" width="7" height="4" viewBox="0 0 7 4"><path d="M0 0h7L3.5 4Z" fill="#555"/></svg>
<div class="a" style="left:599px;top:149px;width:158px;height:33px;border:1px solid #a8a8a8"></div>
<div class="t" style="left:600.74px;top:159.64px;font-size:12px;color:#111;transform:scaleX(1.0667);transform-origin:0 0;">10</div>
<svg class="a" style="left:744px;top:164px" width="7" height="4" viewBox="0 0 7 4"><path d="M0 0h7L3.5 4Z" fill="#555"/></svg>
<div class="a" style="left:279px;top:198px;width:85px;height:25px;border:1px solid #a8a8a8"></div>
<svg class="a" style="left:290px;top:203px" width="14" height="14" viewBox="0 0 14 14"><path d="M7 0v14M0 7h14" stroke="#3a9a3c" stroke-width="1.8"/></svg>
<div class="t" style="left:310.60px;top:203.64px;font-size:12px;color:#111;transform:scaleX(0.9411);transform-origin:0 0;">Add Line</div>
<div class="a" style="left:369px;top:198px;width:85px;height:25px;border:1px solid #a8a8a8"></div>
<svg class="a" style="left:382px;top:203px" width="12" height="12" viewBox="0 0 12 12"><path d="M0.7 0.7L11.3 11.3M11.3 0.7L0.7 11.3" stroke="#d9363e" stroke-width="1.8"/></svg>
<div class="t" style="left:401.33px;top:203.64px;font-size:12px;color:#111;transform:scaleX(0.9418);transform-origin:0 0;">Clear All</div>
<div class="t" style="left:261.92px;top:503.61px;font-size:17px;color:#222;transform:scaleX(1.0146);transform-origin:0 0;">Save/Load Configuration</div>
<div class="a" style="left:262px;top:535px;width:662px;height:25px;border:1px solid #a8a8a8"></div>
<svg class="a" style="left:911px;top:546px" width="7" height="4" viewBox="0 0 7 4"><path d="M0 0h7L3.5 4Z" fill="#555"/></svg>
<div class="a" style="left:927px;top:535px;width:200px;height:25px;border:1px solid #a8a8a8"></div>
<div class="a" style="left:1111px;top:536px;width:1px;height:23px;background:#a8a8a8;"></div>
<svg class="a" style="left:1116px;top:546px" width="7" height="4" viewBox="0 0 7 4"><path d="M0 0h7L3.5 4Z" fill="#555"/></svg>
<svg class="a" style="left:960px;top:539px" width="16" height="16" viewBox="0 0 16 16"><path d="M8 0.5v9M4.5 6L8 9.5L11.5 6" stroke="#333" stroke-width="1.8" fill="none"/><path d="M1 9v5.5h14V9" stroke="#333" stroke-width="1.8" fill="none"/><path d="M5 12h6" stroke="#333" stroke-width="1.4"/></svg>
<div class="t" style="left:981.07px;top:541.04px;font-size:12px;color:#111;transform:scaleX(0.9806);transform-origin:0 0;">Save configuration</div>
<div class="a" style="left:888px;top:605px;width:75px;height:25px;border:1px solid #444"></div>
<div class="a" style="left:891px;top:608px;width:70px;height:19px;border:1px dotted #222"></div>
<div class="t" style="left:904.91px;top:611.04px;font-size:12px;color:#111;transform:scaleX(0.9219);transform-origin:0 0;">Preview</div>
<div class="a" style="left:969px;top:605px;width:75px;height:25px;border:1px solid #a8a8a8"></div>
<div class="t" style="left:997.82px;top:611.04px;font-size:12px;color:#111;transform:scaleX(0.8961);transform-origin:0 0;"><u style="text-decoration-thickness:1px;text-underline-offset:2px">O</u>K</div>
<div class="a" style="left:1050px;top:605px;width:75px;height:25px;border:1px solid #a8a8a8"></div>
<div class="t" style="left:1069.73px;top:611.04px;font-size:12px;color:#111;transform:scaleX(0.9417);transform-origin:0 0;">Cancel</div>
<div class="a" style="left:0px;top:0px;width:1260px;height:1px;background:#0a0a0a;"></div>
<div class="a" style="left:0px;top:0px;width:1px;height:734px;background:#0a0a0a;"></div>
<div class="a" style="left:1px;top:1px;width:1px;height:731px;background:#e4e4e4;"></div>
<div class="a" style="left:1258px;top:0px;width:1px;height:734px;background:#5a5a5a;"></div>
<div class="a" style="left:1259px;top:0px;width:1px;height:734px;background:#050505;"></div>
<div class="a" style="left:0px;top:732px;width:1259px;height:1px;background:#5a5a5a;"></div>
<div class="a" style="left:0px;top:733px;width:1260px;height:1px;background:#050505;"></div>
<div class="a" style="left:1px;top:1px;width:1257px;height:1px;background:#e6e6e6;"></div>
</body></html>
